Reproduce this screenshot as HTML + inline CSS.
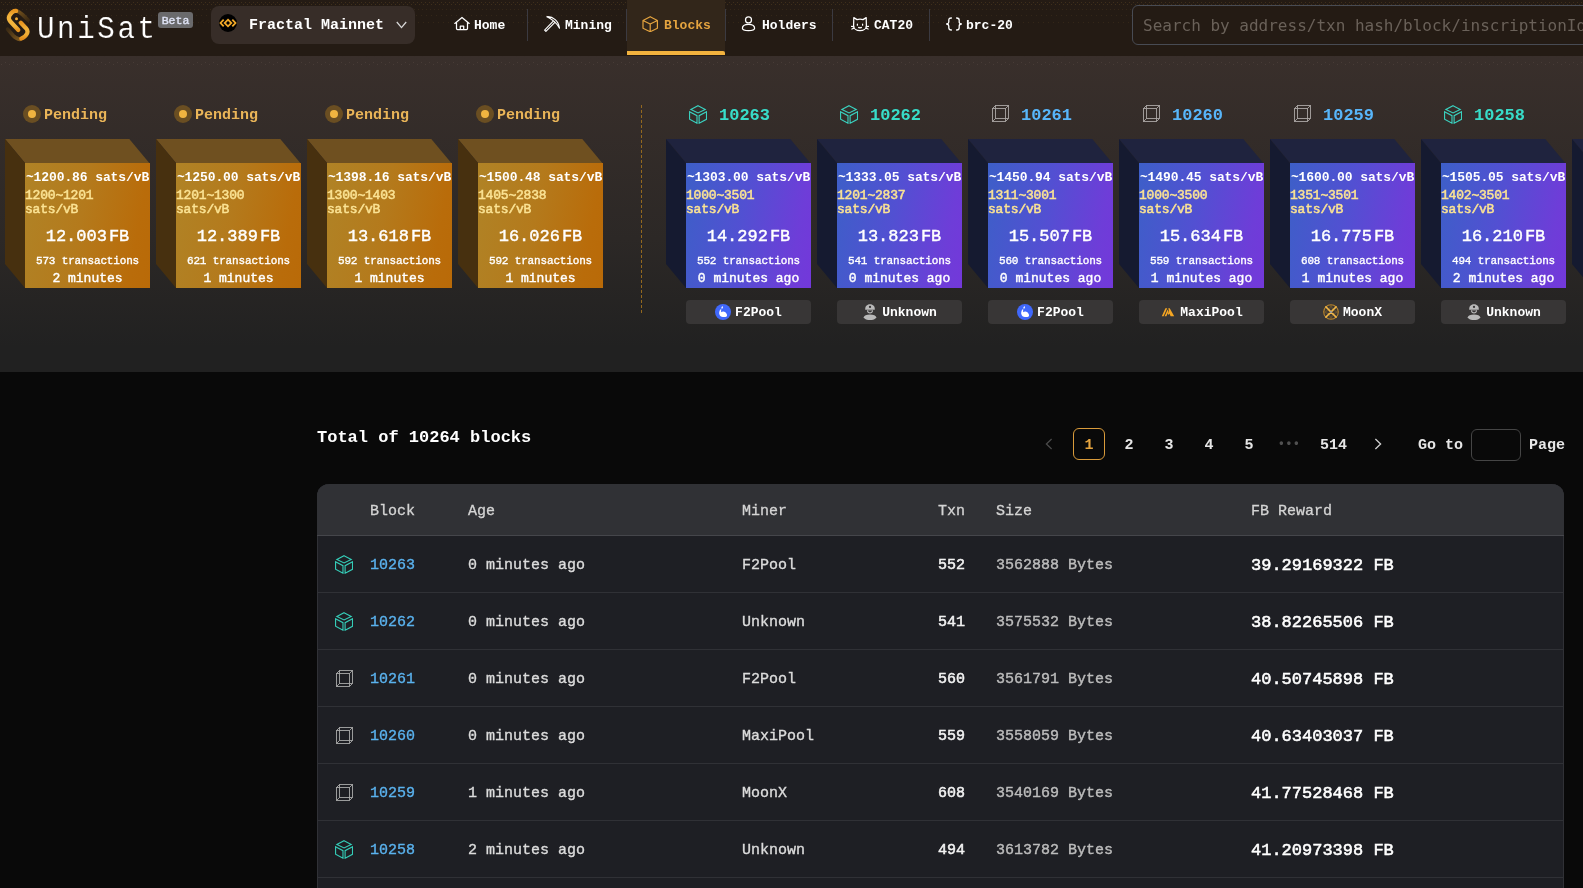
<!DOCTYPE html>
<html lang="en"><head><meta charset="utf-8"><title>UniSat Explorer - Blocks</title>
<style>
*{box-sizing:border-box;margin:0;padding:0}
html,body{width:1583px;height:888px;overflow:hidden;background:#090909;}
body{position:relative;font-family:"Liberation Mono","DejaVu Sans Mono",monospace;color:#fff;font-size:15px;line-height:1}
b{font-weight:700}
/* header */
#hdr{position:absolute;left:0;top:0;width:1583px;height:56px;background:#241b14;will-change:transform}
#hdr:before{content:"";position:absolute;left:0;top:0;width:1583px;height:24px;background-image:linear-gradient(90deg,rgba(170,125,55,0.2) 1px,transparent 1px),linear-gradient(90deg,rgba(170,125,55,0.2) 1px,transparent 1px),linear-gradient(90deg,rgba(170,125,55,0.12) 1px,transparent 1px),linear-gradient(90deg,rgba(170,125,55,0.12) 1px,transparent 1px),linear-gradient(90deg,rgba(170,125,55,0.12) 1px,transparent 1px);background-size:4px 1px,4px 1px,4px 1px,5px 1px,5px 1px;background-position:1px 2px,3px 4px,2px 9px,1px 15px,3px 22px;background-repeat:repeat-x,repeat-x,repeat-x,repeat-x,repeat-x}
#logo{position:absolute;left:5px;top:8px;width:26px;height:34px}
#brand{position:absolute;left:36.8px;top:12px;font-size:31px;letter-spacing:2.8px;line-height:36px;color:#fff;white-space:nowrap;font-weight:400;transform:scaleX(0.94);transform-origin:0 0;-webkit-text-stroke:0.2px #241b14}
#beta{position:absolute;left:158px;top:12px;width:35px;height:16px;border-radius:3px;background:#6a6a6c;color:#dfe3f5;font-size:11.5px;letter-spacing:0;line-height:17px;text-align:center;font-weight:400;-webkit-text-stroke:0.4px #dfe3f5;overflow:hidden}
#net{position:absolute;left:211px;top:6px;width:204px;height:38px;border-radius:8px;background:#372d28}
#net .ic{position:absolute;left:8px;top:8px;width:18px;height:18px}
#net b{position:absolute;left:38px;top:11px;font-size:15px;line-height:18px;color:#fff;white-space:nowrap}
#net .chev{position:absolute;left:185px;top:15px;width:11px;height:8px}
.nav{position:absolute;top:0;height:56px;white-space:nowrap}
.nav svg{position:absolute;top:16px;width:16px;height:16px}
.nav b{position:absolute;top:18px;font-size:13px;line-height:16px;color:#fff}
.sep{position:absolute;top:9px;width:1px;height:32px;background:#3b3a41}
#act{position:absolute;left:627px;top:0;width:98px;height:55px;background:#32261a;}
#act:after{content:"";position:absolute;left:0;top:51px;width:98px;height:4px;background:#f2b23e;border-radius:0 2px 0 0}
#search{position:absolute;left:1132px;top:5px;width:470px;height:40px;border:1px solid #484b53;border-radius:6px;background:#241b14;color:#6a6159;font-size:16px;line-height:40px;padding-left:10px;white-space:nowrap;font-family:"DejaVu Sans Mono","Liberation Mono",monospace}
/* strip */
#strip{will-change:transform;position:absolute;left:0;top:56px;width:1583px;height:316px;background:linear-gradient(180deg,#392f2b 0%,#2c2826 58%,#212121 92%,#212121 100%);overflow:hidden}
#strip:before{content:"";position:absolute;left:0;top:0;width:1583px;height:12px;background-image:linear-gradient(90deg,rgba(150,135,120,0.16) 1px,transparent 1px),linear-gradient(90deg,rgba(150,135,120,0.16) 1px,transparent 1px);background-size:8px 1px,8px 1px;background-position:5px 6px,1px 8px;background-repeat:repeat-x,repeat-x}
.ptitle{position:absolute;top:49px;height:18px;white-space:nowrap}
.ptitle i{position:absolute;left:0;top:0;width:18px;height:18px;border-radius:50%;background:#6a4e22}
.ptitle i:after{content:"";position:absolute;left:5px;top:5px;width:8px;height:8px;border-radius:50%;background:#f0b440}
.ptitle b{position:absolute;left:21px;top:2px;font-size:15px;line-height:18px;color:#eab558;font-weight:700}
.ctitle{position:absolute;top:48px;height:20px;white-space:nowrap}
.ctitle .hi{position:absolute}
.ctitle .cg{left:1px;top:1px}.ctitle .cw{left:2px;top:1px}
.ctitle b{position:absolute;left:31px;top:2px;font-size:17px;line-height:20px;font-weight:700}
.ctitle.g b{color:#38dcc9}
.ctitle.b b{color:#58b6fa}
.cube{position:absolute;top:83px;width:146px;height:150px}
.cube .faces{position:absolute;left:0;top:0}
.cube .front{position:absolute;left:20px;top:24px;width:125px;height:125px;color:#fff;white-space:nowrap;overflow:hidden}
.pend .tf{fill:#6f5020}.pend .lf{fill:#47300f}
.pend .front{background:linear-gradient(100deg,#b08326 0%,#b47a1c 45%,#b96c0a 85%,#b96a08 100%)}
.conf .tf{fill:#1f233e}.conf .lf{fill:#151a30}
.conf .front{background:linear-gradient(100deg,#3d5fc8 0%,#5250d2 45%,#6e3dd8 85%,#7338da 100%)}
.front div{position:absolute;left:0;width:125px}
.l1{top:7px;font-size:13px;letter-spacing:-0.1px;line-height:16px;font-weight:700;text-align:center}
.l2{top:26px;font-size:13px;letter-spacing:-0.2px;line-height:14px;color:#fbe394;font-weight:400;-webkit-text-stroke:0.5px #fbe394}
.l3{top:63px;font-size:17px;line-height:22px;font-weight:400;-webkit-text-stroke:0.42px #fff;text-align:center}
.l3 span{margin-left:2px}
.l4{top:91px;font-size:11px;letter-spacing:-0.16px;line-height:14px;font-weight:400;-webkit-text-stroke:0.35px #fff;text-align:center}
.l5{top:108px;font-size:13px;line-height:16px;font-weight:400;-webkit-text-stroke:0.42px #fff;text-align:center}
.dash{position:absolute;left:641px;top:49px;width:0;height:208px;border-left:1px dashed #93681f}
.pool{position:absolute;top:244px;width:125px;height:24px;border-radius:4px;background:#383636;text-align:center;white-space:nowrap;font-size:13px;line-height:26px;font-weight:700}
.pool .pi{display:inline-block;vertical-align:top;width:16px;height:16px;margin-top:4px;margin-right:4px}
.pool span{display:inline-block;vertical-align:top}
/* list */
#total{will-change:transform;position:absolute;left:317px;top:428px;font-size:17px;line-height:20px;font-weight:700;color:#fff;white-space:nowrap}
#pager{will-change:transform;position:absolute;left:0;top:428px;padding-top:0;height:32px;width:1583px;font-size:15px;font-weight:700;color:#e6e6e6}
#pager span{position:absolute;top:0;height:32px;line-height:36px;text-align:center;white-space:nowrap}
#pager .on{border:1px solid #d99b3b;border-radius:6px;color:#e5a43f;line-height:34px}
#pager .in{border:1px solid #454545;border-radius:6px;background:#090909}
#table{will-change:transform;position:absolute;left:317px;top:484px;width:1247px;height:420px;border-radius:12px 12px 0 0;overflow:hidden;background:#1e1f24;box-shadow:inset 1px 0 #303136,inset -1px 0 #303136}
.thead{position:relative;height:52px;background:#303135;border-bottom:1px solid #45464b;color:#d4d4d4;font-size:15px;-webkit-text-stroke:0.3px #d4d4d4}
.thead span{position:absolute;top:19px;line-height:18px;white-space:nowrap}
.tr{position:relative;height:57px;border-bottom:1px solid #303136;font-size:15px}
.tr span{position:absolute;top:21px;line-height:18px;white-space:nowrap}
.tr .ri{position:absolute}
.tr .cg{left:18px;top:19px}.tr .cw{left:19px;top:20px}
.c1{left:53px}.c2{left:151px}.c3{left:425px}.c4{left:621px}.c5{left:679px}.c6{left:934px}
.tr .c1 a{color:#5ab2ee}
.tr .c2,.tr .c3{color:#dcdcdc;-webkit-text-stroke:0.35px #dcdcdc}
.tr .c1 a{-webkit-text-stroke:0.35px #5ab2ee}
.tr .c4{color:#f2f2f2;font-weight:400;-webkit-text-stroke:0.5px #f2f2f2}
.tr .c5{color:#bcbcbc;-webkit-text-stroke:0.4px #bcbcbc}
.tr .c6{color:#fff;font-weight:400;-webkit-text-stroke:0.55px #fff;font-size:17px}
</style></head><body>
<div id="hdr">
<svg id="logo" viewBox="0 0 26 34"><defs><linearGradient id="lg1" x1="0" y1="0" x2="0" y2="1"><stop offset="0" stop-color="#e8951f"/><stop offset="0.25" stop-color="#f2b33c"/><stop offset="0.8" stop-color="#f2b33c"/><stop offset="1" stop-color="#e8951f"/></linearGradient><linearGradient id="lg2" x1="0" y1="0" x2="0" y2="1"><stop offset="0" stop-color="#e8951f"/><stop offset="0.4" stop-color="#f2b33c"/><stop offset="0.75" stop-color="#f0ac34"/><stop offset="1" stop-color="#e38e1c"/></linearGradient><linearGradient id="lg3" x1="0" y1="0" x2="1" y2="1"><stop offset="0" stop-color="#7a561e"/><stop offset="1" stop-color="#3b2a14"/></linearGradient><linearGradient id="lg4" x1="1" y1="1" x2="0" y2="0"><stop offset="0" stop-color="#7a561e"/><stop offset="1" stop-color="#3b2a14"/></linearGradient></defs>
<path d="M11.1 2.8 C14 3.4 16 5.2 17.5 6.6 L23 12" fill="none" stroke="url(#lg3)" stroke-width="3.8" stroke-linecap="round"/>
<path d="M2.7 21.2 L8.1 27.5 C10 29.6 12.4 31 15 31.3" fill="none" stroke="url(#lg4)" stroke-width="3.8" stroke-linecap="round"/>
<path d="M11.1 2.9 C8.5 2.6 6 5 4.4 7.8 C3.2 10 4 12 5.6 13.8 L13.3 22" fill="none" stroke="url(#lg1)" stroke-width="4.2" stroke-linecap="round" stroke-linejoin="round"/>
<path d="M15.8 14.7 L21 20.2 C22.6 22 23 24 21.8 26 C20.4 28.4 18.4 30 16.3 30.5" fill="none" stroke="url(#lg2)" stroke-width="4.2" stroke-linecap="round" stroke-linejoin="round"/>
<circle cx="11.5" cy="10.8" r="1.5" fill="#f2ac36"/></svg>
<div id="brand">UniSat</div>
<div id="beta">Beta</div>
<div id="net"><svg class="ic" viewBox="0 0 18 18"><circle cx="9" cy="9" r="9" fill="#000"/><path d="M4.7 5.6 L1.5 9 L4.7 12.4 M9 5.7 L12.3 9 L9 12.3 L5.7 9 Z M13.3 5.6 L16.5 9 L13.3 12.4" fill="none" stroke="#f0a828" stroke-width="1.8" stroke-linejoin="miter"/></svg><b>Fractal Mainnet</b><svg class="chev" viewBox="0 0 11 8"><path d="M0.8 1 L5.5 6.6 L10.2 1" fill="none" stroke="#d8d8d8" stroke-width="1.3"/></svg></div>
<div id="act"></div>
<div class="sep" style="left:527px"></div><div class="sep" style="left:626px"></div><div class="sep" style="left:725px"></div><div class="sep" style="left:832px"></div><div class="sep" style="left:929px"></div>
<div class="nav" style="left:453px"><svg style="left:1px" viewBox="0 0 16 16" fill="none" stroke="#fff" stroke-width="1.25" stroke-linejoin="round" stroke-linecap="round"><path d="M0.8 7.4 L8 1.5 L15.2 7.4 M2.5 6.2 L2.5 12.6 Q2.5 13.7 3.6 13.7 L12.4 13.7 Q13.5 13.7 13.5 12.6 L13.5 6.2 M6.3 13.6 L6.3 10 L9.7 10 L9.7 13.6"/></svg><b style="left:21px">Home</b></div>
<div class="nav" style="left:544px"><svg viewBox="0 0 16 16" fill="none" stroke="#fff" stroke-width="1.1" stroke-linejoin="round" stroke-linecap="round"><path d="M2.8 0.7 C9 0.2 14.8 5 15.5 12.2 C13 7.4 9.5 3.6 2.8 0.7 Z M9.5 4.9 L0.6 14.1 L1.9 15.4 L10.9 6.3"/></svg><b style="left:21px">Mining</b></div>
<div class="nav" style="left:642px"><svg viewBox="0 0 16 16" fill="none" stroke="#e5a43f" stroke-width="1.2" stroke-linejoin="round"><path d="M8.2 0.7 L15.4 4.5 L15.4 12.3 L8.2 15.7 L1 12.3 L1 4.5 Z M1 4.5 L8.2 8 L15.4 4.5 M8.2 8 L8.2 15.7"/></svg><b style="left:22px;color:#e5a43f">Blocks</b></div>
<div class="nav" style="left:741px"><svg viewBox="0 0 16 16" fill="none" stroke="#fff" stroke-width="1.25" stroke-linejoin="round"><circle cx="7.5" cy="3.9" r="3"/><path d="M1.4 12.3 C1.4 9.4 4.4 8.3 7.5 8.3 C10.6 8.3 13.6 9.4 13.6 12.3 C13.6 14 10.6 14.7 7.5 14.7 C4.4 14.7 1.4 14 1.4 12.3 Z"/></svg><b style="left:21px">Holders</b></div>
<div class="nav" style="left:851px"><svg style="width:18px" viewBox="0 0 18 16" fill="none" stroke="#fff" stroke-width="1.25" stroke-linejoin="round" stroke-linecap="round"><path d="M2.8 1.6 L6 3.6 C8 3 10 3 12 3.6 L15.2 1.6 L15.4 9.4 C15.4 12.6 12.6 14.6 9 14.6 C5.4 14.6 2.6 12.6 2.6 9.4 Z"/><path d="M6.4 8.2 L6.4 9.2 M11.6 8.2 L11.6 9.2 M7.6 11.4 C8 12 8.6 12 9 11.4 C9.4 12 10 12 10.4 11.4 M0.5 10.4 L2.6 10.6 M0.9 13 L3 12.2 M17.5 10.4 L15.4 10.6 M17.1 13 L15 12.2"/></svg><b style="left:23px">CAT20</b></div>
<div class="nav" style="left:945px"><svg style="width:18px" viewBox="0 0 18 16" fill="none" stroke="#fff" stroke-width="1.3" stroke-linejoin="round" stroke-linecap="round"><path d="M6.4 2 C4.4 2 3.8 2.8 3.8 4.2 L3.8 6 C3.8 7.2 3.2 7.8 1.6 8 C3.2 8.2 3.8 8.8 3.8 10 L3.8 11.8 C3.8 13.2 4.4 14 6.4 14 M11.6 2 C13.6 2 14.2 2.8 14.2 4.2 L14.2 6 C14.2 7.2 14.8 7.8 16.4 8 C14.8 8.2 14.2 8.8 14.2 10 L14.2 11.8 C14.2 13.2 13.6 14 11.6 14"/></svg><b style="left:21px">brc-20</b></div>
<div id="search">Search by address/txn hash/block/inscriptionId</div>
</div>

<div id="strip">
<div class="ptitle" style="left:23px"><i></i><b>Pending</b></div>
<div class="cube pend" style="left:5px"><svg class="faces" width="146" height="150" viewBox="0 0 146 150"><polygon class="tf" points="0,0 124.3,0 144.3,24 20,24"/><polygon class="lf" points="0,0 20,24 20,149 0,125"/></svg><div class="front"><div class="l1">~1200.86 sats/vB</div><div class="l2">1200~1201<br>sats/vB</div><div class="l3">12.003<span>FB</span></div><div class="l4">573 transactions</div><div class="l5">2 minutes</div></div></div>
<div class="ptitle" style="left:174px"><i></i><b>Pending</b></div>
<div class="cube pend" style="left:156px"><svg class="faces" width="146" height="150" viewBox="0 0 146 150"><polygon class="tf" points="0,0 124.3,0 144.3,24 20,24"/><polygon class="lf" points="0,0 20,24 20,149 0,125"/></svg><div class="front"><div class="l1">~1250.00 sats/vB</div><div class="l2">1201~1300<br>sats/vB</div><div class="l3">12.389<span>FB</span></div><div class="l4">621 transactions</div><div class="l5">1 minutes</div></div></div>
<div class="ptitle" style="left:325px"><i></i><b>Pending</b></div>
<div class="cube pend" style="left:307px"><svg class="faces" width="146" height="150" viewBox="0 0 146 150"><polygon class="tf" points="0,0 124.3,0 144.3,24 20,24"/><polygon class="lf" points="0,0 20,24 20,149 0,125"/></svg><div class="front"><div class="l1">~1398.16 sats/vB</div><div class="l2">1300~1403<br>sats/vB</div><div class="l3">13.618<span>FB</span></div><div class="l4">592 transactions</div><div class="l5">1 minutes</div></div></div>
<div class="ptitle" style="left:476px"><i></i><b>Pending</b></div>
<div class="cube pend" style="left:458px"><svg class="faces" width="146" height="150" viewBox="0 0 146 150"><polygon class="tf" points="0,0 124.3,0 144.3,24 20,24"/><polygon class="lf" points="0,0 20,24 20,149 0,125"/></svg><div class="front"><div class="l1">~1500.48 sats/vB</div><div class="l2">1405~2838<br>sats/vB</div><div class="l3">16.026<span>FB</span></div><div class="l4">592 transactions</div><div class="l5">1 minutes</div></div></div>
<div class="dash"></div>
<div class="ctitle g" style="left:688px"><svg class="hi cg" width="18.1" height="18.9" viewBox="0 0 18.6 19.6" preserveAspectRatio="none" fill="none" stroke="#3ad2c0" stroke-width="1.15" stroke-linejoin="miter"><path d="M9.3 0.7 L16.7 4.6 L9.3 8.3 L1.9 4.6 Z M0.6 7 L8.2 11.1 L8.2 18.9 L0.6 14.8 Z M18 7 L10.4 11.1 L10.4 18.9 L18 14.8 Z"/></svg><b>10263</b></div>
<div class="cube conf" style="left:666px"><svg class="faces" width="146" height="150" viewBox="0 0 146 150"><polygon class="tf" points="0,0 124.3,0 144.3,24 20,24"/><polygon class="lf" points="0,0 20,24 20,149 0,125"/></svg><div class="front"><div class="l1">~1303.00 sats/vB</div><div class="l2">1000~3501<br>sats/vB</div><div class="l3">14.292<span>FB</span></div><div class="l4">552 transactions</div><div class="l5">0 minutes ago</div></div></div>
<div class="pool" style="left:686px"><svg class="pi" viewBox="0 0 16 16"><circle cx="8" cy="8" r="8" fill="#4068fb"/><path d="M7.5 2.1 C8.1 3 8.1 4.7 7 4.7 C5.9 4.7 6.2 3.3 7.5 2.1 Z M5.6 5.3 C4.4 6.6 3.9 8.4 4.3 10 C4.8 12 6 12.9 8 12.9 L10.4 12.9 C11.7 12.9 12.3 11.6 11.9 10.4 C11.3 8.6 9.8 7.4 8.2 7.4 C7.4 7.4 6.7 7.8 6.3 8.3 C6 7.3 6 6.2 6.5 5.6 Z" fill="#fff"/></svg><span>F2Pool</span></div>
<div class="ctitle g" style="left:839px"><svg class="hi cg" width="18.1" height="18.9" viewBox="0 0 18.6 19.6" preserveAspectRatio="none" fill="none" stroke="#3ad2c0" stroke-width="1.15" stroke-linejoin="miter"><path d="M9.3 0.7 L16.7 4.6 L9.3 8.3 L1.9 4.6 Z M0.6 7 L8.2 11.1 L8.2 18.9 L0.6 14.8 Z M18 7 L10.4 11.1 L10.4 18.9 L18 14.8 Z"/></svg><b>10262</b></div>
<div class="cube conf" style="left:817px"><svg class="faces" width="146" height="150" viewBox="0 0 146 150"><polygon class="tf" points="0,0 124.3,0 144.3,24 20,24"/><polygon class="lf" points="0,0 20,24 20,149 0,125"/></svg><div class="front"><div class="l1">~1333.05 sats/vB</div><div class="l2">1201~2837<br>sats/vB</div><div class="l3">13.823<span>FB</span></div><div class="l4">541 transactions</div><div class="l5">0 minutes ago</div></div></div>
<div class="pool" style="left:837px"><svg class="pi" viewBox="0 0 16 16"><ellipse cx="8" cy="13.3" rx="6.2" ry="2.8" fill="#b9b9b9"/><path d="M3.2 5.8 L3.2 5 C3.2 -1.2 12.8 -1.2 12.8 5 L12.8 5.8 Z" fill="#b9b9b9"/><circle cx="8" cy="2.9" r="1.15" fill="#383637"/><path d="M4.9 6.2 C4.9 10.6 11.1 10.6 11.1 6.2 Z" fill="#b9b9b9"/><path d="M6 6.4 C6 8.8 10 8.8 10 6.4 Z" fill="#383637"/></svg><span>Unknown</span></div>
<div class="ctitle b" style="left:990px"><svg class="hi cw" width="17" height="17" viewBox="0 0 17 17" fill="none" stroke="#aaa6a4" stroke-width="0.9"><rect x="0.5" y="3.5" width="13" height="13"/><rect x="3.5" y="0.5" width="13" height="13"/><path d="M0.5 3.5 L3.5 0.5 M13.5 3.5 L16.5 0.5 M0.5 16.5 L3.5 13.5 M13.5 16.5 L16.5 13.5"/></svg><b>10261</b></div>
<div class="cube conf" style="left:968px"><svg class="faces" width="146" height="150" viewBox="0 0 146 150"><polygon class="tf" points="0,0 124.3,0 144.3,24 20,24"/><polygon class="lf" points="0,0 20,24 20,149 0,125"/></svg><div class="front"><div class="l1">~1450.94 sats/vB</div><div class="l2">1311~3001<br>sats/vB</div><div class="l3">15.507<span>FB</span></div><div class="l4">560 transactions</div><div class="l5">0 minutes ago</div></div></div>
<div class="pool" style="left:988px"><svg class="pi" viewBox="0 0 16 16"><circle cx="8" cy="8" r="8" fill="#4068fb"/><path d="M7.5 2.1 C8.1 3 8.1 4.7 7 4.7 C5.9 4.7 6.2 3.3 7.5 2.1 Z M5.6 5.3 C4.4 6.6 3.9 8.4 4.3 10 C4.8 12 6 12.9 8 12.9 L10.4 12.9 C11.7 12.9 12.3 11.6 11.9 10.4 C11.3 8.6 9.8 7.4 8.2 7.4 C7.4 7.4 6.7 7.8 6.3 8.3 C6 7.3 6 6.2 6.5 5.6 Z" fill="#fff"/></svg><span>F2Pool</span></div>
<div class="ctitle b" style="left:1141px"><svg class="hi cw" width="17" height="17" viewBox="0 0 17 17" fill="none" stroke="#aaa6a4" stroke-width="0.9"><rect x="0.5" y="3.5" width="13" height="13"/><rect x="3.5" y="0.5" width="13" height="13"/><path d="M0.5 3.5 L3.5 0.5 M13.5 3.5 L16.5 0.5 M0.5 16.5 L3.5 13.5 M13.5 16.5 L16.5 13.5"/></svg><b>10260</b></div>
<div class="cube conf" style="left:1119px"><svg class="faces" width="146" height="150" viewBox="0 0 146 150"><polygon class="tf" points="0,0 124.3,0 144.3,24 20,24"/><polygon class="lf" points="0,0 20,24 20,149 0,125"/></svg><div class="front"><div class="l1">~1490.45 sats/vB</div><div class="l2">1000~3500<br>sats/vB</div><div class="l3">15.634<span>FB</span></div><div class="l4">559 transactions</div><div class="l5">1 minutes ago</div></div></div>
<div class="pool" style="left:1139px"><svg class="pi" viewBox="0 0 16 16"><path d="M1.8 12.2 L5.4 4.2 L7.2 4.2 L3.6 12.2 Z M4.6 12.2 L7.6 5.6 L8.5 7.6 L6.4 12.2 Z M8.3 4.2 L9.7 4.2 L14.2 12.2 L10.6 12.2 L9.4 9.6 L8.6 11 L7.8 9.4 L9 7.2 Z" fill="#f5a623"/></svg><span>MaxiPool</span></div>
<div class="ctitle b" style="left:1292px"><svg class="hi cw" width="17" height="17" viewBox="0 0 17 17" fill="none" stroke="#aaa6a4" stroke-width="0.9"><rect x="0.5" y="3.5" width="13" height="13"/><rect x="3.5" y="0.5" width="13" height="13"/><path d="M0.5 3.5 L3.5 0.5 M13.5 3.5 L16.5 0.5 M0.5 16.5 L3.5 13.5 M13.5 16.5 L16.5 13.5"/></svg><b>10259</b></div>
<div class="cube conf" style="left:1270px"><svg class="faces" width="146" height="150" viewBox="0 0 146 150"><polygon class="tf" points="0,0 124.3,0 144.3,24 20,24"/><polygon class="lf" points="0,0 20,24 20,149 0,125"/></svg><div class="front"><div class="l1">~1600.00 sats/vB</div><div class="l2">1351~3501<br>sats/vB</div><div class="l3">16.775<span>FB</span></div><div class="l4">608 transactions</div><div class="l5">1 minutes ago</div></div></div>
<div class="pool" style="left:1290px"><svg class="pi" viewBox="0 0 16 16" fill="none"><circle cx="8" cy="8" r="7.3" stroke="#b8832a" stroke-width="1.1"/><path d="M8 1.2 C5.8 5 5.8 11 8 14.8 C10.2 11 10.2 5 8 1.2 M1.2 8 C5 5.8 11 5.8 14.8 8 C11 10.2 5 10.2 1.2 8" stroke="#8f6a28" stroke-width="0.7"/><path d="M2.9 2.9 L13.1 13.1 M13.1 2.9 L2.9 13.1" stroke="#f0b648" stroke-width="1.5" stroke-linecap="round"/><circle cx="8" cy="8" r="1.1" fill="#9aa0a8"/></svg><span>MoonX</span></div>
<div class="ctitle g" style="left:1443px"><svg class="hi cg" width="18.1" height="18.9" viewBox="0 0 18.6 19.6" preserveAspectRatio="none" fill="none" stroke="#3ad2c0" stroke-width="1.15" stroke-linejoin="miter"><path d="M9.3 0.7 L16.7 4.6 L9.3 8.3 L1.9 4.6 Z M0.6 7 L8.2 11.1 L8.2 18.9 L0.6 14.8 Z M18 7 L10.4 11.1 L10.4 18.9 L18 14.8 Z"/></svg><b>10258</b></div>
<div class="cube conf" style="left:1421px"><svg class="faces" width="146" height="150" viewBox="0 0 146 150"><polygon class="tf" points="0,0 124.3,0 144.3,24 20,24"/><polygon class="lf" points="0,0 20,24 20,149 0,125"/></svg><div class="front"><div class="l1">~1505.05 sats/vB</div><div class="l2">1402~3501<br>sats/vB</div><div class="l3">16.210<span>FB</span></div><div class="l4">494 transactions</div><div class="l5">2 minutes ago</div></div></div>
<div class="pool" style="left:1441px"><svg class="pi" viewBox="0 0 16 16"><ellipse cx="8" cy="13.3" rx="6.2" ry="2.8" fill="#b9b9b9"/><path d="M3.2 5.8 L3.2 5 C3.2 -1.2 12.8 -1.2 12.8 5 L12.8 5.8 Z" fill="#b9b9b9"/><circle cx="8" cy="2.9" r="1.15" fill="#383637"/><path d="M4.9 6.2 C4.9 10.6 11.1 10.6 11.1 6.2 Z" fill="#b9b9b9"/><path d="M6 6.4 C6 8.8 10 8.8 10 6.4 Z" fill="#383637"/></svg><span>Unknown</span></div>
<div class="cube conf" style="left:1572px"><svg class="faces" width="146" height="150" viewBox="0 0 146 150"><polygon class="tf" points="0,0 124.3,0 144.3,24 20,24"/><polygon class="lf" points="0,0 20,24 20,149 0,125"/></svg></div>
</div>
<div id="total">Total of 10264 blocks</div>
<div id="pager">
<span style="left:1033px;width:32px;color:#4a4a4a"><svg width="8" height="12" viewBox="0 0 8 12" style="vertical-align:-1px"><path d="M6.6 1 L1.4 6 L6.6 11" fill="none" stroke="#4a4a4a" stroke-width="1.3"/></svg></span>
<span class="on" style="left:1073px;width:32px">1</span>
<span style="left:1113px;width:32px">2</span>
<span style="left:1153px;width:32px">3</span>
<span style="left:1193px;width:32px">4</span>
<span style="left:1233px;width:32px">5</span>
<span style="left:1273px;width:32px;color:#505050;font-size:12px;letter-spacing:0.3px;line-height:33px">&#8226;&#8226;&#8226;</span>
<span style="left:1313px;width:41px">514</span>
<span style="left:1362px;width:32px"><svg width="8" height="12" viewBox="0 0 8 12" style="vertical-align:-1px"><path d="M1.4 1 L6.6 6 L1.4 11" fill="none" stroke="#d0d0d0" stroke-width="1.3"/></svg></span>
<span style="left:1418px">Go to</span>
<span class="in" style="left:1471px;width:50px;top:1px"></span>
<span style="left:1529px">Page</span>
</div>

<div id="table"><div class="thead"><span class="c1">Block</span><span class="c2">Age</span><span class="c3">Miner</span><span class="c4">Txn</span><span class="c5">Size</span><span class="c6">FB Reward</span></div>
<div class="tr"><svg class="ri cg" width="18.1" height="18.9" viewBox="0 0 18.6 19.6" preserveAspectRatio="none" fill="none" stroke="#35cdb8" stroke-width="1.15" stroke-linejoin="miter"><path d="M9.3 0.7 L16.7 4.6 L9.3 8.3 L1.9 4.6 Z M0.6 7 L8.2 11.1 L8.2 18.9 L0.6 14.8 Z M18 7 L10.4 11.1 L10.4 18.9 L18 14.8 Z"/></svg><span class="c1"><a>10263</a></span><span class="c2">0 minutes ago</span><span class="c3">F2Pool</span><span class="c4">552</span><span class="c5">3562888 Bytes</span><span class="c6">39.29169322 FB</span></div>
<div class="tr"><svg class="ri cg" width="18.1" height="18.9" viewBox="0 0 18.6 19.6" preserveAspectRatio="none" fill="none" stroke="#35cdb8" stroke-width="1.15" stroke-linejoin="miter"><path d="M9.3 0.7 L16.7 4.6 L9.3 8.3 L1.9 4.6 Z M0.6 7 L8.2 11.1 L8.2 18.9 L0.6 14.8 Z M18 7 L10.4 11.1 L10.4 18.9 L18 14.8 Z"/></svg><span class="c1"><a>10262</a></span><span class="c2">0 minutes ago</span><span class="c3">Unknown</span><span class="c4">541</span><span class="c5">3575532 Bytes</span><span class="c6">38.82265506 FB</span></div>
<div class="tr"><svg class="ri cw" width="17" height="17" viewBox="0 0 17 17" fill="none" stroke="#a8a8a8" stroke-width="0.9"><rect x="0.5" y="3.5" width="13" height="13"/><rect x="3.5" y="0.5" width="13" height="13"/><path d="M0.5 3.5 L3.5 0.5 M13.5 3.5 L16.5 0.5 M0.5 16.5 L3.5 13.5 M13.5 16.5 L16.5 13.5"/></svg><span class="c1"><a>10261</a></span><span class="c2">0 minutes ago</span><span class="c3">F2Pool</span><span class="c4">560</span><span class="c5">3561791 Bytes</span><span class="c6">40.50745898 FB</span></div>
<div class="tr"><svg class="ri cw" width="17" height="17" viewBox="0 0 17 17" fill="none" stroke="#a8a8a8" stroke-width="0.9"><rect x="0.5" y="3.5" width="13" height="13"/><rect x="3.5" y="0.5" width="13" height="13"/><path d="M0.5 3.5 L3.5 0.5 M13.5 3.5 L16.5 0.5 M0.5 16.5 L3.5 13.5 M13.5 16.5 L16.5 13.5"/></svg><span class="c1"><a>10260</a></span><span class="c2">0 minutes ago</span><span class="c3">MaxiPool</span><span class="c4">559</span><span class="c5">3558059 Bytes</span><span class="c6">40.63403037 FB</span></div>
<div class="tr"><svg class="ri cw" width="17" height="17" viewBox="0 0 17 17" fill="none" stroke="#a8a8a8" stroke-width="0.9"><rect x="0.5" y="3.5" width="13" height="13"/><rect x="3.5" y="0.5" width="13" height="13"/><path d="M0.5 3.5 L3.5 0.5 M13.5 3.5 L16.5 0.5 M0.5 16.5 L3.5 13.5 M13.5 16.5 L16.5 13.5"/></svg><span class="c1"><a>10259</a></span><span class="c2">1 minutes ago</span><span class="c3">MoonX</span><span class="c4">608</span><span class="c5">3540169 Bytes</span><span class="c6">41.77528468 FB</span></div>
<div class="tr"><svg class="ri cg" width="18.1" height="18.9" viewBox="0 0 18.6 19.6" preserveAspectRatio="none" fill="none" stroke="#35cdb8" stroke-width="1.15" stroke-linejoin="miter"><path d="M9.3 0.7 L16.7 4.6 L9.3 8.3 L1.9 4.6 Z M0.6 7 L8.2 11.1 L8.2 18.9 L0.6 14.8 Z M18 7 L10.4 11.1 L10.4 18.9 L18 14.8 Z"/></svg><span class="c1"><a>10258</a></span><span class="c2">2 minutes ago</span><span class="c3">Unknown</span><span class="c4">494</span><span class="c5">3613782 Bytes</span><span class="c6">41.20973398 FB</span></div>
<div class="tr"></div></div>
</body></html>
